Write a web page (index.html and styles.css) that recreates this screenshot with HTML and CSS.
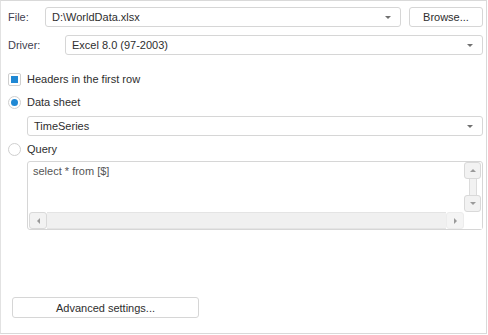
FILE: index.html
```html
<!DOCTYPE html>
<html lang="en">
<head>
    <meta charset="UTF-8">
    <title>Data Source</title>
    <link rel="stylesheet" href="styles.css">
</head>
<body>
    <div class="dialog">
        <!-- File row -->
        <div class="row">
            <span class="label file-label">File:</span>
            <div class="combo grow">
                <span class="combo-text">D:\WorldData.xlsx</span>
                <span class="arrow"></span>
            </div>
            <button class="btn browse">Browse...</button>
        </div>

        <!-- Driver row -->
        <div class="row driver-row">
            <span class="label driver-label">Driver:</span>
            <div class="combo grow">
                <span class="combo-text">Excel 8.0 (97-2003)</span>
                <span class="arrow"></span>
            </div>
        </div>

        <div class="option check-row">
            <span class="checkbox"><span class="check-fill"></span></span>
            <span>Headers in the first row</span>
        </div>

        <div class="option radio-row">
            <span class="radio on"><span class="dot"></span></span>
            <span>Data sheet</span>
        </div>

        <div class="combo indent sheet">
            <span class="combo-text">TimeSeries</span>
            <span class="arrow"></span>
        </div>

        <div class="option radio-row">
            <span class="radio"></span>
            <span>Query</span>
        </div>

        <div class="memo indent">
            <div class="memo-text">select * from [$]</div>
            <div class="vscroll">
                <span class="sbtn"><span class="tri up"></span></span>
                <span class="vtrack"></span>
                <span class="sbtn"><span class="tri down"></span></span>
            </div>
            <div class="hscroll">
                <span class="sbtn hbtn"><span class="tri left"></span></span>
                <span class="htrack"></span>
                <span class="sbtn hbtn right-btn"><span class="tri right"></span></span>
            </div>
            <div class="corner"></div>
        </div>

        <button class="btn advanced">Advanced settings...</button>
    </div>
</body>
</html>
```

FILE: styles.css
```css
 body {
     margin: 0;
     background-color: #ffffff;
     font-family: "Liberation Sans", Arial, sans-serif;
     font-size: 11px;
     color: #2e2e2e;
 }

 .dialog {
     box-sizing: border-box;
     width: 487px;
     height: 334px;
     border: 1px solid #d9d9d9;
     border-left-color: #e2e2e2;
     padding: 6px 3px 0 7px;
 }

 .row {
     display: flex;
     align-items: center;
     height: 20px;
 }
 .driver-row {
     margin-top: 8px;
 }

 .label {
     color: #3f3f4f;
 }
 .file-label {
     width: 37px;
 }
 .driver-label {
     width: 57px;
 }

 .combo {
     box-sizing: border-box;
     height: 20px;
     border: 1px solid #d6d6d6;
     border-radius: 3px;
     display: flex;
     align-items: center;
     padding: 0 6px 0 6px;
     background: #ffffff;
 }
 .grow {
     flex: 1;
 }
 .combo-text {
     flex: 1;
     color: #2e2e2e;
 }
 .arrow {
     width: 0;
     height: 0;
     border-left: 3px solid transparent;
     border-right: 3px solid transparent;
     border-top: 3px solid #707070;
     margin-right: 3px;
 }

 .btn {
     box-sizing: border-box;
     height: 20px;
     border: 1px solid #d6d6d6;
     border-radius: 3px;
     background: #ffffff;
     font-family: "Liberation Sans", Arial, sans-serif;
     font-size: 11px;
     color: #2e2e2e;
     padding: 0;
 }
 .browse {
     width: 74px;
     margin-left: 8px;
 }

 .option {
     display: flex;
     align-items: center;
     gap: 6px;
     height: 20px;
 }
 .check-row {
     margin-top: 14px;
 }
 .radio-row {
     margin-top: 3px;
 }

 .checkbox {
     box-sizing: border-box;
     width: 13px;
     height: 13px;
     border: 1px solid #cfcfcf;
     border-radius: 2px;
     display: flex;
     align-items: center;
     justify-content: center;
 }
 .check-fill {
     width: 7px;
     height: 7px;
     background: #1f88d4;
 }

 .radio {
     box-sizing: border-box;
     width: 13px;
     height: 13px;
     border: 1px solid #cfcfcf;
     border-radius: 50%;
     display: flex;
     align-items: center;
     justify-content: center;
 }
 .dot {
     width: 7px;
     height: 7px;
     border-radius: 50%;
     background: #1f88d4;
 }

 .indent {
     margin-left: 19px;
 }
 .sheet {
     margin-top: 4px;
 }

 .memo {
     box-sizing: border-box;
     margin-top: 2px;
     height: 69px;
     border: 1px solid #d6d6d6;
     border-radius: 3px;
     display: grid;
     grid-template-columns: 1fr 18px;
     grid-template-rows: 1fr 17px;
     padding: 0 0 0 1px;
 }
 .memo-text {
     padding: 3px 0 0 4px;
     color: #555555;
 }

 .vscroll {
     display: flex;
     flex-direction: column;
     align-items: center;
     padding: 0 1px 0 0;
 }
 .sbtn {
     box-sizing: border-box;
     width: 17px;
     height: 17px;
     border: 1px solid #d9d9d9;
     border-radius: 3px;
     background: #f2f2f2;
     display: flex;
     align-items: center;
     justify-content: center;
     flex-shrink: 0;
 }
 .vtrack {
     flex: 1;
     width: 8px;
     box-sizing: border-box;
     border-left: 1px solid #dcdcdc;
     border-right: 1px solid #dcdcdc;
     background: #f2f2f2;
 }

 .hscroll {
     display: flex;
     padding: 0 0 1px 0;
 }
 .hbtn {
     width: 18px;
 }
 .right-btn {
     border-color: #ececec;
     background: #f4f4f4;
 }
 .htrack {
     flex: 1;
     box-sizing: border-box;
     height: 17px;
     background: #f0f0f0;
     border-top: 1px solid #e4e4e4;
     border-bottom: 1px solid #e4e4e4;
 }
 .corner {
     background: #ffffff;
 }

 .tri {
     width: 0;
     height: 0;
 }
 .tri.up {
     border-left: 3px solid transparent;
     border-right: 3px solid transparent;
     border-bottom: 3px solid #9a9a9a;
 }
 .tri.down {
     border-left: 3px solid transparent;
     border-right: 3px solid transparent;
     border-top: 3px solid #9a9a9a;
 }
 .tri.left {
     border-top: 3px solid transparent;
     border-bottom: 3px solid transparent;
     border-right: 3px solid #9a9a9a;
 }
 .tri.right {
     border-top: 3px solid transparent;
     border-bottom: 3px solid transparent;
     border-left: 3px solid #9a9a9a;
 }

 .advanced {
     display: block;
     width: 187px;
     height: 21px;
     margin: 67px 0 0 4px;
 }
```
